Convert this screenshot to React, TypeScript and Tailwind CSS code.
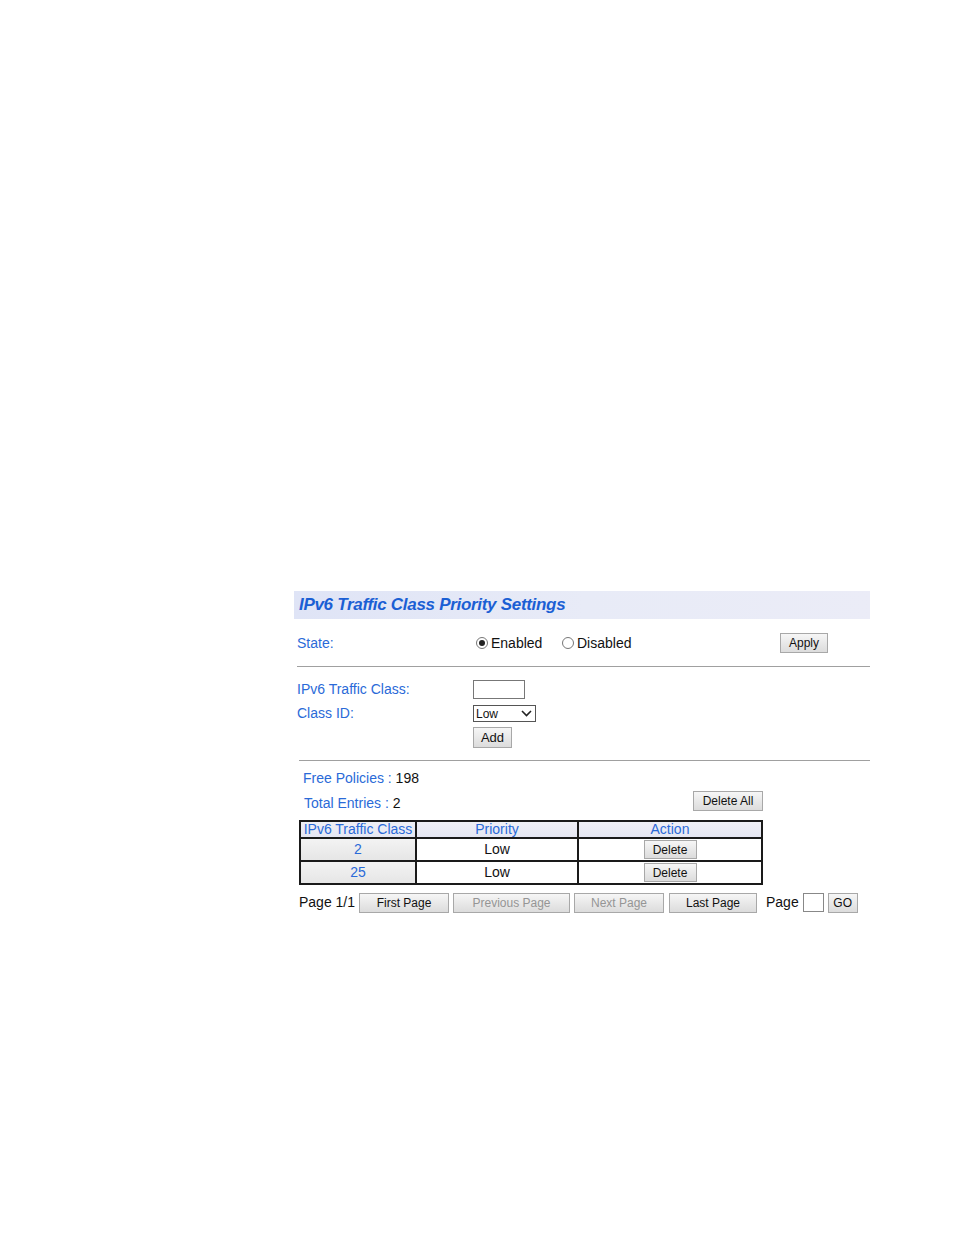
import React from "react";

const font = { fontFamily: '"Liberation Sans", Arial, sans-serif' };

function Btn({ children, className = "", disabled = false }: { children: React.ReactNode; className?: string; disabled?: boolean }) {
  return (
    <button
      className={`border border-[#a8a8a8] bg-gradient-to-b from-[#f6f6f6] to-[#dcdcdc] text-[12px] leading-none ${disabled ? "text-[#959595]" : "text-[#111]"} ${className}`}
    >
      {children}
    </button>
  );
}

function Radio({ checked }: { checked?: boolean }) {
  return (
    <span className="inline-flex w-[12px] h-[12px] rounded-full border border-[#777] bg-white items-center justify-center mr-[3px]">
      {checked && <span className="w-[6px] h-[6px] rounded-full bg-[#222]" />}
    </span>
  );
}

export default function App() {
  const rows = [
    { cls: "2", pri: "Low" },
    { cls: "25", pri: "Low" },
  ];

  return (
    <div className="w-[954px] h-[1235px] bg-white" style={font}>
      <div className="pt-[591px] pl-[294px] w-[870px]">
        {/* ── HEADER ─────────────────────────────── */}
        <div className="h-[28px] w-[576px] bg-gradient-to-r from-[#dfe4f6] via-[#e8ebf7] to-[#ebecf7] flex items-center pl-[5px]">
          <h1 className="text-[17px] font-bold italic text-[#1b5fd4] tracking-[-0.3px]">IPv6 Traffic Class Priority Settings</h1>
        </div>

        {/* ── STATE ──────────────────────────────── */}
        <div className="flex items-center h-[24px] mt-[12px] pl-[3px] text-[14px]">
          <span className="w-[179px] text-[#2a6ad8]">State:</span>
          <span className="flex items-center w-[86px] text-[#111]">
            <Radio checked />Enabled
          </span>
          <span className="flex items-center w-[218px] text-[#111]">
            <Radio />Disabled
          </span>
          <Btn className="w-[48px] h-[20px]">Apply</Btn>
        </div>
        <div className="h-px w-[573px] bg-[#a0a0a0] ml-[3px] mt-[11px]" />

        {/* ── ADD FORM ───────────────────────────── */}
        <div className="pl-[3px] text-[14px] mt-[13px]">
          <div className="flex items-center h-[19px]">
            <span className="w-[176px] text-[#2a6ad8]">IPv6 Traffic Class:</span>
            <span className="w-[52px] h-[19px] border border-[#777] bg-white" />
          </div>
          <div className="flex items-center h-[17px] mt-[6px]">
            <span className="w-[176px] text-[#2a6ad8]">Class ID:</span>
            <span className="w-[63px] h-[17px] border border-[#555] bg-white flex items-center justify-between pl-[2px] pr-[3px] text-[12px] text-[#111]">
              Low
              <svg width="11" height="7" viewBox="0 0 11 7"><path d="M1 1l4.5 4.5L10 1" fill="none" stroke="#222" strokeWidth="1.6" /></svg>
            </span>
          </div>
          <div className="flex mt-[5px]">
            <span className="w-[176px]" />
            <Btn className="w-[39px] h-[21px] text-[13px]">Add</Btn>
          </div>
        </div>
        <div className="h-px w-[571px] bg-[#a0a0a0] ml-[5px] mt-[12px]" />

        {/* ── SUMMARY ────────────────────────────── */}
        <div className="pl-[9px] text-[14px] mt-[8px] h-[18px] flex items-center">
          <span className="text-[#2a6ad8]">Free Policies :&nbsp;</span>
          <span className="text-[#111]">198</span>
        </div>
        <div className="flex items-start h-[20px] mt-[6px] text-[14px]">
          <span className="pl-[10px] w-[399px] leading-[20px]">
            <span className="text-[#2a6ad8]">Total Entries :&nbsp;</span>
            <span className="text-[#111]">2</span>
          </span>
          <Btn className="w-[70px] h-[20px] -mt-[2px]">Delete All</Btn>
        </div>

        {/* ── TABLE ──────────────────────────────── */}
        <table className="mt-[7px] ml-[5px] w-[464px] border-collapse border-2 border-[#1a1a1a] text-[14px]">
          <thead>
            <tr className="h-[17px] bg-gradient-to-b from-[#f0f0f6] to-[#e4e6f2]">
              <th className="w-[116px] border-2 border-[#1a1a1a] font-normal text-[#2a6ad8] leading-[15px] p-0 whitespace-nowrap">IPv6 Traffic Class</th>
              <th className="w-[162px] border-2 border-[#1a1a1a] font-normal text-[#2a6ad8] leading-[15px] p-0">Priority</th>
              <th className="border-2 border-[#1a1a1a] font-normal text-[#2a6ad8] leading-[15px] p-0">Action</th>
            </tr>
          </thead>
          <tbody>
            {rows.map((r) => (
              <tr key={r.cls} className="h-[23px]">
                <td className="border-2 border-[#1a1a1a] text-center text-[#2a6ad8] bg-gradient-to-b from-[#f3f3f3] to-[#e6e6e6] p-0">{r.cls}</td>
                <td className="border-2 border-[#1a1a1a] text-center text-[#111] p-0">{r.pri}</td>
                <td className="border-2 border-[#1a1a1a] p-0">
                  <div className="flex justify-center">
                    <Btn className="w-[53px] h-[19px]">Delete</Btn>
                  </div>
                </td>
              </tr>
            ))}
          </tbody>
        </table>

        {/* ── PAGINATION ─────────────────────────── */}
        <div className="flex items-center mt-[7px] ml-[5px] text-[14px] text-[#111]">
          <span className="w-[60px]">Page 1/1</span>
          <Btn className="w-[90px] h-[20px]">First Page</Btn>
          <Btn disabled className="w-[117px] h-[20px] ml-[4px]">Previous Page</Btn>
          <Btn disabled className="w-[90px] h-[20px] ml-[4px]">Next Page</Btn>
          <Btn className="w-[88px] h-[20px] ml-[5px]">Last Page</Btn>
          <span className="ml-[9px]">Page</span>
          <span className="w-[21px] h-[19px] border border-[#888] bg-white ml-[4px]" />
          <Btn className="w-[30px] h-[20px] ml-[4px]">GO</Btn>
        </div>
      </div>
    </div>
  );
}
